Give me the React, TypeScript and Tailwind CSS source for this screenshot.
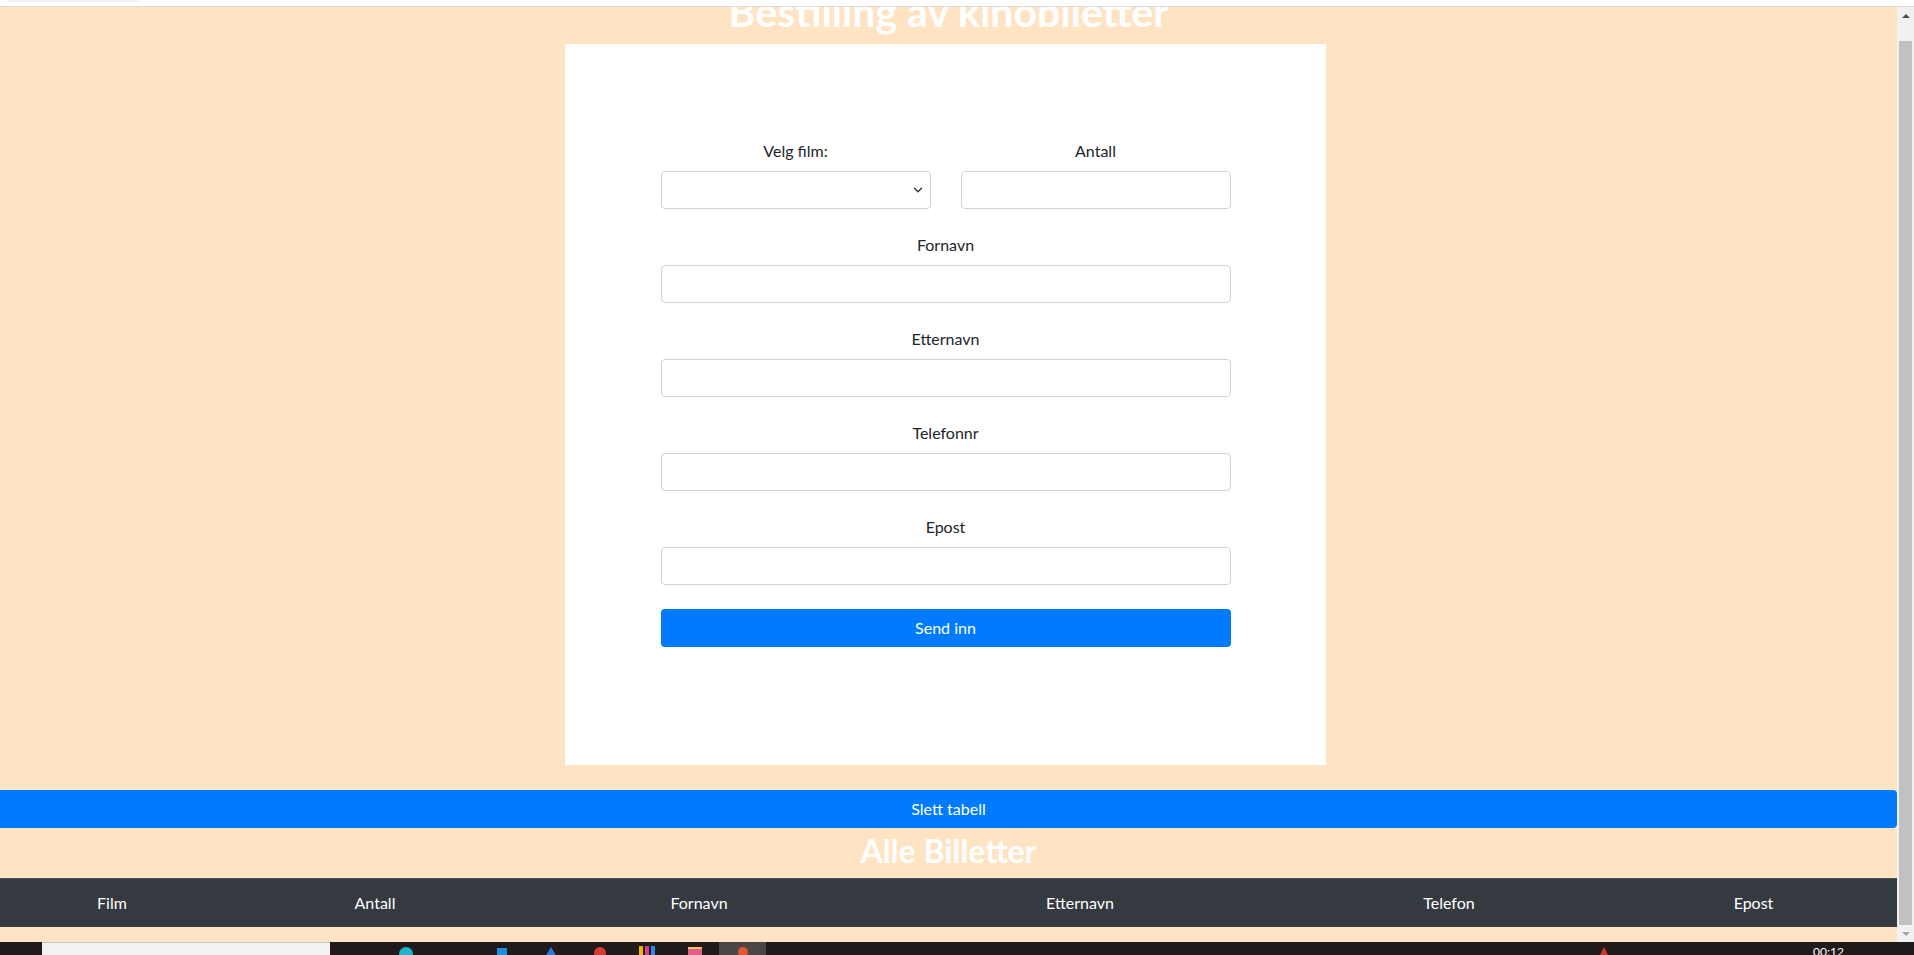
import { ChevronDown } from 'lucide-react'

const font = { fontFamily: 'Lato, "Liberation Sans", sans-serif' }

const fields = ['Fornavn', 'Etternavn', 'Telefonnr', 'Epost']
const columns = [
  { label: 'Film',      w: 'w-[224px]' },
  { label: 'Antall',    w: 'w-[302px]' },
  { label: 'Fornavn',   w: 'w-[346px]' },
  { label: 'Etternavn', w: 'w-[416px]' },
  { label: 'Telefon',   w: 'w-[322px]' },
  { label: 'Epost',     w: 'w-[287px]' },
]

const inputCls = 'block w-full h-[38px] px-3 bg-white border border-[#ced4da] rounded-[4px] text-[#495057] outline-none'

function Scrollbar() {
  return (
    <div className="w-[17px] shrink-0 bg-[#f1f1f1] flex flex-col">
      {/* up arrow */}
      <div className="h-[17px] flex items-center justify-center">
        <div className="w-0 h-0 border-x-[4px] border-x-transparent border-b-[4px] border-b-[#505050]" />
      </div>
      <div className="h-[17px]" />
      <div className="flex-1 mx-[2px] bg-[#c1c1c1]" />
      {/* down arrow */}
      <div className="h-[17px] flex items-center justify-center">
        <div className="w-0 h-0 border-x-[4px] border-x-transparent border-t-[4px] border-t-[#a3a3a3]" />
      </div>
    </div>
  )
}

function Taskbar() {
  return (
    <div className="h-[13px] shrink-0 bg-[#211a1b] flex overflow-hidden relative">
      <div className="w-[42px]" />
      <div className="w-[288px] bg-[#f2f2f2] border-t border-[#c6c6c6]" />
      <div className="flex items-start gap-0">
        <div className="ml-[69px] mt-[5px] w-[14px] h-[14px] rounded-full bg-[#1fb5c9]" />
        <div className="ml-[84px] mt-[6px] w-[10px] h-[10px] bg-[#1a8fe0]" />
        <div className="ml-[38px] mt-[5px] w-0 h-0 border-x-[6px] border-x-transparent border-b-[10px] border-b-[#2a7be0]" />
        <div className="ml-[37px] mt-[5px] w-[12px] h-[12px] rounded-full bg-[#d93a2f]" />
        <div className="ml-[33px] mt-[4px] flex gap-[2px]">
          <div className="w-[4px] h-[10px] bg-[#f4b400]" />
          <div className="w-[4px] h-[10px] bg-[#d63b8f]" />
          <div className="w-[4px] h-[10px] bg-[#2f8be6]" />
        </div>
        <div className="ml-[33px] mt-[5px] w-[14px] h-[10px] bg-[#e35d8b] border-t-2 border-[#f6c94a]" />
        <div className="ml-[17px] w-[47px] h-[13px] bg-[#4b4545] flex justify-center">
          <div className="mt-[5px] w-[10px] h-[10px] rounded-full bg-[#e2572c]" />
        </div>
      </div>
      <div className="ml-[834px] mt-[5px] w-0 h-0 border-x-[4px] border-x-transparent border-b-[8px] border-b-[#d0392b]" />
      <div className="ml-[205px] mt-[4px] text-[12px] leading-none text-white" style={font}>00:12</div>
    </div>
  )
}

export default function App() {
  return (
    <div className="h-[955px] w-full overflow-hidden flex flex-col bg-[#ffe4c4] text-[#212529]" style={font}>
      {/* browser top edge */}
      <div className="h-[7px] shrink-0 bg-white border-b border-[#dadada]">
        <div className="ml-2 w-[132px] h-[2px] bg-[#f2f2f2] rounded-b-md" />
      </div>

      <div className="flex-1 flex min-h-0">
        <main className="flex-1 overflow-hidden flex flex-col">
          <h1 className="-mt-[19px] mb-2 text-center text-[41px] leading-[48px] font-bold text-white">
            Bestilling av kinobiletter
          </h1>

          <div className="ml-[565px] w-[761px] bg-white pt-[95px] pb-[118px]">
            <form className="mx-auto w-[570px]" onSubmit={e => e.preventDefault()}>
              <div className="grid grid-cols-2 gap-x-[30px]">
                <div className="mb-6">
                  <label className="block text-center text-base leading-6 mb-2">Velg film:</label>
                  <div className="relative">
                    <select className={`${inputCls} appearance-none`} />
                    <ChevronDown className="absolute right-[6px] top-[12px] w-[14px] h-[14px] text-[#3a3a3a]" strokeWidth={2.5} />
                  </div>
                </div>
                <div className="mb-6">
                  <label className="block text-center text-base leading-6 mb-2">Antall</label>
                  <input type="text" className={inputCls} />
                </div>
              </div>

              {fields.map(f => (
                <div key={f} className="mb-6">
                  <label className="block text-center text-base leading-6 mb-2">{f}</label>
                  <input type="text" className={inputCls} />
                </div>
              ))}

              <button type="submit" className="block w-full h-[38px] rounded-[4px] bg-[#007bff] text-white text-base">
                Send inn
              </button>
            </form>
          </div>

          <button className="mt-[25px] shrink-0 w-full h-[38px] rounded-r-[4px] bg-[#007bff] text-white text-base">
            Slett tabell
          </button>

          <h2 className="mt-1 mb-2 text-center text-[32px] leading-[38px] font-bold text-white">
            Alle Billetter
          </h2>

          <table className="w-full table-fixed border-collapse shrink-0">
            <colgroup>
              {columns.map(c => <col key={c.label} className={c.w} />)}
            </colgroup>
            <thead>
              <tr className="bg-[#343a40] border-t border-[#4b545c]">
                {columns.map(c => (
                  <th key={c.label} className="py-3 text-center text-base leading-6 font-normal text-white">
                    {c.label}
                  </th>
                ))}
              </tr>
            </thead>
          </table>
        </main>
        <Scrollbar />
      </div>

      <Taskbar />
    </div>
  )
}
